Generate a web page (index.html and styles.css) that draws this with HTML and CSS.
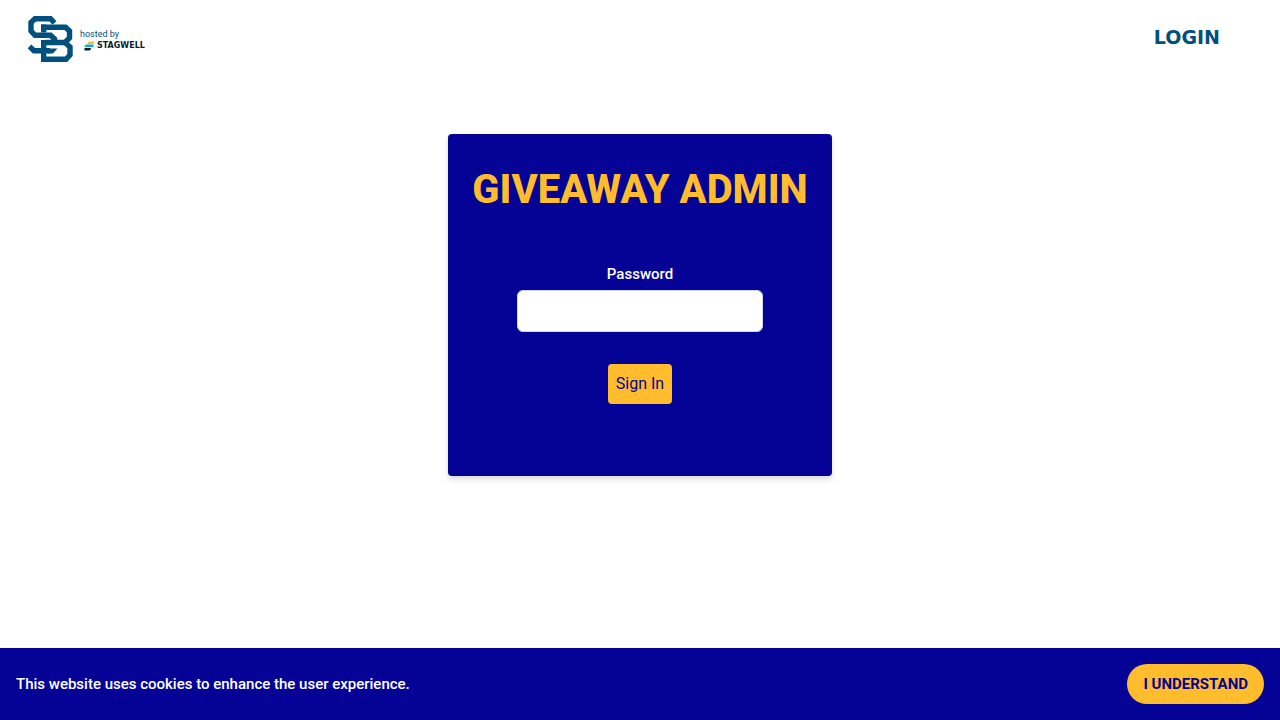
FILE: index.html
```html
<!DOCTYPE html>
<html lang="en">
<head>
<meta charset="utf-8">
<meta name="viewport" content="width=device-width, initial-scale=1">
<title>Giveaway Admin</title>
<link rel="stylesheet" href="styles.css">
</head>
<body>
<header class="header">
  <a class="brand" href="#">
    <svg class="brand-mark" viewBox="0 0 46 46" aria-hidden="true">
      <g fill="none" stroke="currentColor" stroke-width="5.400">
        <path d="M26.500 7 L22.500 2.700 H7 L3 6.500 V15 L7 19.200 H22.500 L26.500 23 V26"/>
        <path d="M1.500 30.500 L6 34.700 H22"/>
        <path d="M13 11.200 H37.500 L41.500 15 V22 L37 26.500 H18"/>
        <path d="M15.700 8.500 V16.500 M15.700 24 V46"/>
        <path d="M37 26.500 L42 31 V39 L38 43.300 H13"/>
      </g>
      <path fill="currentColor" d="M20 32.500 H29.500 L25 37.400 H20 Z"/>
    </svg>
    <span class="host">
      <span class="host-label">hosted by</span>
      <span class="host-name">
        <svg class="host-mark" viewBox="0 0 11 10" aria-hidden="true">
          <path fill="#ffbd2e" d="M5 0.500 H11 L9.500 3 H3.500 Q3.500 1 5 0.500 Z"/>
          <path fill="#14a9cf" d="M2 3.500 H9.500 V6 H0.500 Q0.500 4 2 3.500 Z"/>
          <path fill="#0a1c2d" d="M0.500 7 H7 Q7 9.500 5 9.500 H0.500 Z"/>
        </svg>
        <span class="host-text">STAGWELL</span>
      </span>
    </span>
  </a>
  <a class="login" href="#">LOGIN</a>
</header>
<main class="main">
  <form class="card">
    <h1 class="title">GIVEAWAY ADMIN</h1>
    <label class="label" for="password">Password</label>
    <input class="input" id="password" type="password">
    <button class="submit" type="button">Sign In</button>
  </form>
</main>
<footer class="cookies">
  <p class="cookies-text">This website uses cookies to enhance the user experience.</p>
  <button class="accept" type="button">I UNDERSTAND</button>
</footer>
</body>
</html>
```
FILE: styles.css
```css
* {
  box-sizing: border-box;
}
body {
  margin: 0;
  min-height: 100vh;
  display: flex;
  flex-direction: column;
  background: #fff;
  color: #fff;
  font: 15px/24px Roboto, sans-serif;
}
.header {
  display: flex;
  justify-content: space-between;
  align-items: flex-start;
  padding: 16px 60px 8px 28px;
}
.brand {
  display: flex;
  gap: 6px;
  color: #00507d;
  text-decoration: none;
}
.brand-mark {
  width: 46px;
  height: 46px;
}
.host {
  display: flex;
  flex-direction: column;
  padding-top: 12px;
}
.host-label {
  font-size: 9px;
  line-height: 12px;
}
.host-name {
  display: flex;
  align-items: center;
  gap: 2px;
  padding-left: 4px;
}
.host-mark {
  width: 11px;
  height: 10px;
}
.host-text {
  color: #0a1c2d;
  font: bold 8px/12px "DejaVu Sans", sans-serif;
}
.login {
  padding-top: 9px;
  color: #00507d;
  font: bold 19px/24px "DejaVu Sans", sans-serif;
  text-decoration: none;
}
.main {
  flex: 1;
  display: flex;
  justify-content: center;
  align-items: flex-start;
  padding: 64px 16px;
}
.card {
  display: flex;
  flex-direction: column;
  align-items: center;
  width: 100%;
  max-width: 384px;
  padding: 32px 24px 72px;
  border-radius: 4px;
  background: #040396;
  box-shadow: 0 4px 6px rgba(0, 0, 0, 0.1), 0 2px 4px rgba(0, 0, 0, 0.06);
}
.title {
  margin: 0 0 48px;
  color: #ffbd2e;
  font-size: 40px;
  line-height: 48px;
  font-weight: 800;
  white-space: nowrap;
}
.label {
  margin-bottom: 4px;
  font-weight: 500;
}
.input {
  width: 246px;
  height: 42px;
  margin-bottom: 32px;
  padding: 8px 12px;
  border: 1px solid #d1d5e8;
  border-radius: 6px;
  background: #fff;
  font: inherit;
}
.submit {
  padding: 8px;
  border: 0;
  border-radius: 4px;
  background: #ffbd2e;
  color: #040396;
  font: inherit;
  font-size: 16px;
}
.cookies {
  display: flex;
  justify-content: space-between;
  align-items: center;
  gap: 16px;
  padding: 16px;
  background: #040396;
}
.cookies-text {
  margin: 0;
  font-weight: 500;
}
.accept {
  padding: 8px 16px;
  border: 0;
  border-radius: 20px;
  background: #ffbd2e;
  color: #040396;
  font: inherit;
  font-weight: 700;
}
```
